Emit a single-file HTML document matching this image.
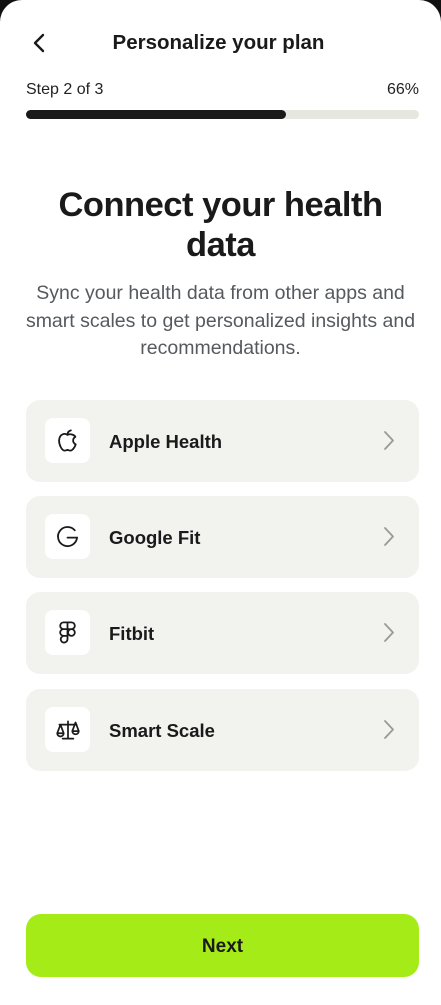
<!DOCTYPE html>
<html><head><style>
*{margin:0;padding:0;box-sizing:border-box}
body{width:441px;height:1005px;background:#111;font-family:"Liberation Sans",sans-serif;color:#1a1a1a;overflow:hidden}
.scr{position:absolute;left:0;top:0;width:441px;height:1005px;background:#fff;border-radius:22px 22px 0 0}
.hdr{position:absolute;top:31px;left:-2px;width:441px;text-align:center;font-weight:bold;font-size:20.5px}
.back{position:absolute;left:32px;top:33px}
.step{position:absolute;top:81px;left:26px;font-size:16px;color:#222}
.pct{position:absolute;top:81px;right:22px;font-size:16px;color:#222}
.bar{position:absolute;top:110px;left:26px;width:393px;height:9px;background:#e6e7df;border-radius:5px}
.fill{width:260px;height:9px;background:#1a1a1a;border-radius:5px}
h1{position:absolute;top:185px;left:0;width:441px;text-align:center;font-size:34.5px;line-height:40px;letter-spacing:-0.5px}
.sub{position:absolute;top:280px;left:0;width:441px;text-align:center;font-size:19.5px;line-height:27.5px;color:#555a5f;white-space:nowrap}
.card{position:absolute;left:26px;width:393px;height:82px;background:#f2f2ee;border-radius:14px}
.ic{position:absolute;left:19px;top:18px;width:45px;height:45px;background:#fff;border-radius:8px;display:flex;align-items:center;justify-content:center}
.lb{position:absolute;left:83px;top:31px;font-size:18.5px;font-weight:bold}
.ch{position:absolute;right:24px;top:30px}
.btn{position:absolute;left:26px;top:914px;width:393px;height:63px;background:#a5eb17;border-radius:15px;text-align:center;line-height:65px;font-weight:bold;font-size:19px}
</style></head><body><div class="scr">
<svg class="back" width="14" height="20" viewBox="0 0 14 20"><path d="M11 2L3 10l8 8" fill="none" stroke="#1a1a1a" stroke-width="2.4" stroke-linecap="round" stroke-linejoin="round"/></svg>
<div class="hdr">Personalize your plan</div>
<div class="step">Step 2 of 3</div><div class="pct">66%</div>
<div class="bar"><div class="fill"></div></div>
<h1>Connect your health<br>data</h1>
<div class="sub">Sync your health data from other apps and<br>smart scales to get personalized insights and<br>recommendations.</div>

<div class="card" style="top:400px"><div class="ic"><svg width="27" height="27" viewBox="0 0 24 24" fill="none" stroke="#1a1a1a" stroke-width="1.6" stroke-linecap="round" stroke-linejoin="round"><path d="M12 7c-2-1.5-7-1.5-7.5 5 0 4 2.5 9 5 9 1 0 1.5-.6 2.5-.6s1.5.6 2.5.6c2 0 4-3 4.8-5.5-1.5-.8-2.3-2-2.3-3.5s.8-2.6 2-3.3C17.8 6.6 14.5 5.8 12 7z"/><path d="M12 7c0-2 1-3.5 3-4"/></svg></div><div class="lb">Apple Health</div><svg class="ch" width="12" height="21" viewBox="0 0 12 21"><path d="M2 2l8 8.5L2 19" fill="none" stroke="#999" stroke-width="1.8" stroke-linecap="round" stroke-linejoin="round"/></svg></div>

<div class="card" style="top:496px"><div class="ic"><svg width="27" height="27" viewBox="0 0 24 24" fill="none" stroke="#1a1a1a" stroke-width="1.6" stroke-linecap="round"><path d="M18.5 6.5A8.5 8.5 0 1 0 20.5 13H12"/></svg></div><div class="lb">Google Fit</div><svg class="ch" width="12" height="21" viewBox="0 0 12 21"><path d="M2 2l8 8.5L2 19" fill="none" stroke="#999" stroke-width="1.8" stroke-linecap="round" stroke-linejoin="round"/></svg></div>

<div class="card" style="top:592px"><div class="ic"><svg width="27" height="27" viewBox="0 0 24 24" fill="none" stroke="#1a1a1a" stroke-width="1.6" stroke-linejoin="round"><path d="M8.5 3H12v6H8.5a3 3 0 0 1 0-6zM12 3h3.5a3 3 0 0 1 0 6H12zM8.5 9H12v6H8.5a3 3 0 0 1 0-6zM15.5 9a3 3 0 1 1 0 6 3 3 0 0 1 0-6zM8.5 15H12v3a3 3 0 1 1-3.5-3z"/></svg></div><div class="lb">Fitbit</div><svg class="ch" width="12" height="21" viewBox="0 0 12 21"><path d="M2 2l8 8.5L2 19" fill="none" stroke="#999" stroke-width="1.8" stroke-linecap="round" stroke-linejoin="round"/></svg></div>

<div class="card" style="top:689px"><div class="ic"><svg width="28" height="26" viewBox="0 0 26 24" fill="none" stroke="#1a1a1a" stroke-width="1.6" stroke-linecap="round" stroke-linejoin="round"><path d="M13 4v16M8 20h10M5 7h16M3 15l3-8 3 8zM17 13l3-8 3 8zM3 15a3 3 0 0 0 6 0M17 13a3 3 0 0 0 6 0"/></svg></div><div class="lb">Smart Scale</div><svg class="ch" width="12" height="21" viewBox="0 0 12 21"><path d="M2 2l8 8.5L2 19" fill="none" stroke="#999" stroke-width="1.8" stroke-linecap="round" stroke-linejoin="round"/></svg></div>

<div class="btn">Next</div>
</div></body></html>
